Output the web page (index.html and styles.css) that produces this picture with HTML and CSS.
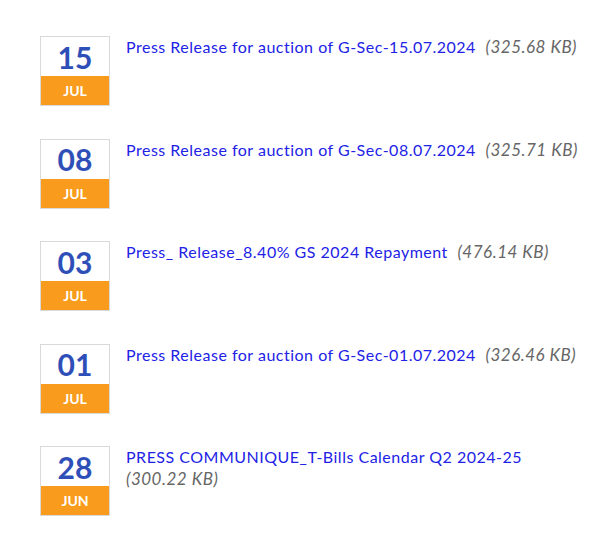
FILE: index.html
```html
<!DOCTYPE html>
<html>
<head>
<meta charset="utf-8">
<link rel="stylesheet" href="styles.css">
</head>
<body>
<ul class="list">
  <li class="item">
    <div class="date"><span class="day">15</span><span class="month">JUL</span></div>
    <div class="info"><a class="link" href="#">Press Release for auction of G-Sec-15.07.2024</a> <span class="size">(325.68 KB)</span></div>
  </li>
  <li class="item">
    <div class="date"><span class="day">08</span><span class="month">JUL</span></div>
    <div class="info"><a class="link" href="#">Press Release for auction of G-Sec-08.07.2024</a> <span class="size">(325.71 KB)</span></div>
  </li>
  <li class="item">
    <div class="date"><span class="day">03</span><span class="month">JUL</span></div>
    <div class="info"><a class="link" href="#">Press_ Release_8.40% GS 2024 Repayment</a> <span class="size">(476.14 KB)</span></div>
  </li>
  <li class="item">
    <div class="date"><span class="day">01</span><span class="month">JUL</span></div>
    <div class="info"><a class="link" href="#">Press Release for auction of G-Sec-01.07.2024</a> <span class="size">(326.46 KB)</span></div>
  </li>
  <li class="item">
    <div class="date"><span class="day">28</span><span class="month">JUN</span></div>
    <div class="info"><a class="link" href="#">PRESS COMMUNIQUE_T-Bills Calendar Q2 2024-25</a> <span class="size">(300.22 KB)</span></div>
  </li>
</ul>
</body>
</html>
```
FILE: styles.css
```css
html, body {
  margin: 0;
  padding: 0;
  background: #fff;
  font-family: Lato, "Open Sans", sans-serif;
}
.list {
  list-style: none;
  margin: 0;
  padding: 36px 0 0 40px;
  display: flex;
  flex-direction: column;
  gap: 32.5px;
}
.item {
  display: flex;
  align-items: flex-start;
  gap: 16px;
}
.date {
  flex: 0 0 auto;
  width: 68px;
  height: 68px;
  border: 1px solid #d9d9d9;
  display: flex;
  flex-direction: column;
}
.day {
  height: 39px;
  display: flex;
  align-items: center;
  justify-content: center;
  font-size: 30px;
  font-weight: 700;
  color: #2f4fb8;
  line-height: 1;
}
.month {
  flex: 1;
  background: #f99b1c;
  color: #fff;
  font-size: 14px;
  font-weight: 700;
  display: flex;
  align-items: center;
  justify-content: center;
}
.info {
  width: 465px;
  font-size: 16px;
  line-height: 22px;
  letter-spacing: 0.5px;
}
.link {
  color: #2222e6;
  text-decoration: none;
  padding-right: 5px;
}
.size {
  color: #666;
  font-style: italic;
  font-size: 17px;
}
```
